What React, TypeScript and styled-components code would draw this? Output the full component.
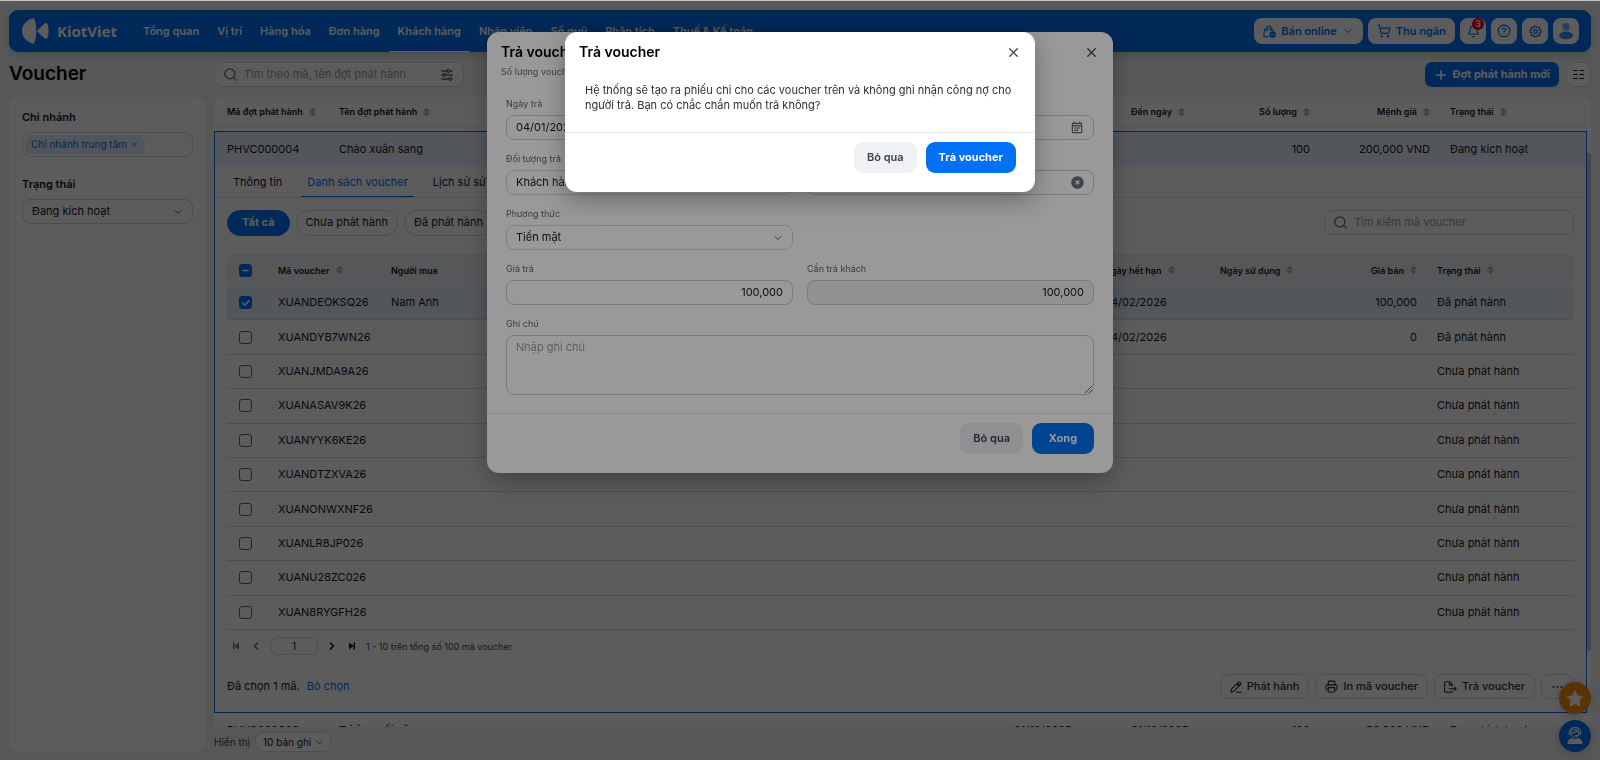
import React from "react";
import styled, { createGlobalStyle, css } from "styled-components";
import { Bell, Check, ChevronDown, ChevronLeft, ChevronRight, CircleHelp, Minus, Plus, Printer, Search, ShoppingCart, X } from "lucide-react";
import { TbAdjustmentsHorizontal, TbSettings } from "react-icons/tb";
import { MdOutlineEventNote } from "react-icons/md";

const blue = "#0070f4";
const line = "#d5d8dd";
const ink = "#15171a";
const muted = "#5d6673";

const GlobalStyle = createGlobalStyle`
  *, *::before, *::after { box-sizing: border-box; }
  body { margin: 0; background: #f1f2f4; }
  body, button, input, select, textarea {
    font-family: Inter, "Liberation Sans", sans-serif;
    font-size: 11px;
    line-height: 15px;
    color: ${ink};
  }
  button { padding: 0; border: 0; background: none; cursor: pointer; }
  h1, h2, p { margin: 0; }
  a { color: inherit; text-decoration: none; }
  svg { flex: none; display: block; }
`;

const Page = styled.div`
  display: flex;
  flex-direction: column;
  height: 100vh;
  min-height: 600px;
  padding: 9px 9px 8px;
  border-top: 1px solid #c1c5c3;
`;

/* Top navigation */
const TopBar = styled.header`
  display: flex;
  align-items: center;
  flex: none;
  height: 42px;
  padding: 0 12px 0 13px;
  border-radius: 9px;
  background: ${blue};
  color: #fff;
  box-shadow: 0 3px 8px rgba(0, 0, 0, 0.16);
`;
const Brand = styled.a`
  display: flex;
  align-items: center;
  gap: 8px;
  width: 112px;
  font: 700 15px/24px "Noto Sans", sans-serif;
`;
const Nav = styled.nav`
  display: flex;
  flex: 1;
  align-self: stretch;
`;
const NavLink = styled.a<{ $active?: boolean }>`
  display: flex;
  align-items: center;
  padding: 0 9px;
  font-weight: 600;
  white-space: nowrap;
  box-shadow: ${(p) => (p.$active ? "inset 0 -1px #fff" : "none")};
`;
const BarActions = styled.div`
  display: flex;
  gap: 5px;
`;
const BarButton = styled.button<{ $square?: boolean }>`
  position: relative;
  display: flex;
  align-items: center;
  justify-content: center;
  gap: 5px;
  height: 26px;
  width: ${(p) => (p.$square ? "26px" : "auto")};
  padding: ${(p) => (p.$square ? "0" : "0 9px")};
  border-radius: 8px;
  background: #fff;
  color: ${blue};
  font-weight: 600;
`;
const Count = styled.span`
  position: absolute;
  top: 0;
  right: 2px;
  width: 12px;
  height: 12px;
  border-radius: 6px;
  background: #f5000c;
  color: #fff;
  font-size: 9px;
  line-height: 12px;
`;

/* Page frame */
const Columns = styled.main`
  display: grid;
  grid-template-columns: 196px minmax(0, 1fr);
  gap: 9px;
  flex: 1;
  min-height: 0;
  padding-top: 10px;
`;
const Column = styled.div`
  display: flex;
  flex-direction: column;
  min-height: 0;
`;
const Title = styled.h1`
  height: 25px;
  margin-bottom: 10px;
  font-size: 19px;
  font-weight: 600;
  line-height: 24px;
  color: #000;
`;
const Sidebar = styled.aside`
  display: flex;
  flex-direction: column;
  gap: 20px;
  flex: 1;
  padding: 13px 12px 13px 13px;
  border-radius: 10px;
  background: #fff;
`;
const Filter = styled.div`
  display: flex;
  flex-direction: column;
  gap: 8px;
`;
const FilterName = styled.label`
  font-weight: 600;
  line-height: 14px;
`;
const boxed = css`
  height: 25px;
  border: 1px solid ${line};
  border-radius: 8px;
  background: #fff;
`;
const TagBox = styled.div`
  ${boxed}
  display: flex;
  align-items: center;
  padding: 0 2px;
`;
const Tag = styled.button`
  display: flex;
  align-items: center;
  gap: 3px;
  height: 19px;
  padding: 0 6px;
  border-radius: 6px;
  background: #e3effe;
  color: ${blue};
  font-size: 10px;
`;

/* Select with its own chevron */
const SelectBox = styled.div<{ $compact?: boolean }>`
  display: grid;
  align-items: center;
  svg {
    grid-area: 1 / 1;
    justify-self: end;
    margin-right: ${(p) => (p.$compact ? "6px" : "9px")};
    pointer-events: none;
    color: ${muted};
  }
`;
const SelectField = styled.select<{ $compact?: boolean }>`
  ${boxed}
  grid-area: 1 / 1;
  width: 100%;
  height: ${(p) => (p.$compact ? "20px" : "25px")};
  padding: ${(p) => (p.$compact ? "0 18px 0 7px" : "0 24px 0 9px")};
  font-size: ${(p) => (p.$compact ? "10px" : "11px")};
  appearance: none;
`;

/* Toolbar */
const Toolbar = styled.div`
  display: flex;
  align-items: center;
  justify-content: space-between;
  flex: none;
  height: 25px;
  margin-bottom: 10px;
`;
const SearchBox = styled.label`
  ${boxed}
  display: flex;
  align-items: center;
  gap: 6px;
  width: 250px;
  padding: 0 8px;
  color: ${muted};
  input {
    flex: 1;
    min-width: 0;
    padding: 0;
    border: 0;
    outline: 0;
    background: none;
  }
  input::placeholder { color: #979da7; }
`;
const Group = styled.div<{ $gap: number }>`
  display: flex;
  align-items: center;
  gap: ${(p) => p.$gap}px;
`;
const NewButton = styled.button`
  display: flex;
  align-items: center;
  gap: 5px;
  height: 25px;
  padding: 0 9px;
  border-radius: 7px;
  background: ${blue};
  color: #fff;
  font-weight: 700;
`;
const OutlineButton = styled.button<{ $square?: boolean }>`
  ${boxed}
  display: flex;
  align-items: center;
  justify-content: center;
  gap: 5px;
  min-width: 25px;
  padding: ${(p) => (p.$square ? "0" : "0 9px")};
  font-weight: 500;
  color: #2a2f36;
`;

/* Voucher batch table */
const Panel = styled.section`
  display: flex;
  flex: 1;
  min-height: 0;
  overflow: hidden;
  border-radius: 8px 8px 0 0;
  background: #fff;
`;
const Track = styled.div`
  width: 4px;
  flex: none;
  padding-top: 56px;
`;
const Thumb = styled.div`
  height: 498px;
  border-radius: 0 2px 2px 0;
  background: #bfc2c7;
`;
const BatchTable = styled.table`
  flex: 1;
  align-self: flex-start;
  width: 100%;
  table-layout: fixed;
  border-spacing: 0;
  text-align: left;
`;
const HeadCell = styled.th<{ $right?: boolean }>`
  padding: 0 0 4px;
  font-size: 9px;
  font-weight: 600;
  white-space: nowrap;
  > div {
    display: flex;
    align-items: center;
    justify-content: ${(p) => (p.$right ? "flex-end" : "flex-start")};
    gap: 6px;
    height: 30px;
    padding: 0 7px 0 13px;
    border-bottom: 1px solid #e8eaed;
  }
`;
const BatchRow = styled.tr<{ $open?: boolean }>`
  td {
    height: ${(p) => (p.$open ? "36px" : "34px")};
    padding: 0 7px 0 13px;
    white-space: nowrap;
  }
  ${(p) =>
    p.$open &&
    css`
      td { background: #e6f1fe; border-top: 1px solid ${blue}; }
      td:first-child { border-left: 1px solid ${blue}; padding-left: 12px; }
      td:last-child { border-right: 1px solid ${blue}; }
    `}
`;
const Num = styled.td`
  text-align: right;
`;
const DetailCell = styled.td`
  padding: 0;
  border: 1px solid ${blue};
  border-top: 0;
`;
const Tabs = styled.div`
  display: flex;
  height: 31px;
  padding-left: 12px;
  border-bottom: 1px solid #e3e5e8;
`;
const Tab = styled.button<{ $active?: boolean }>`
  padding: 0 6px;
  margin-right: 13px;
  color: ${(p) => (p.$active ? blue : ink)};
  box-shadow: ${(p) => (p.$active ? `inset 0 -1px ${blue}` : "none")};
`;
const Detail = styled.div`
  padding: 12px 12px 13px;
`;
const Chip = styled.button<{ $active?: boolean }>`
  height: 26px;
  padding: 0 ${(p) => (p.$active ? "14px" : "9px")};
  border: 1px solid ${(p) => (p.$active ? blue : line)};
  border-radius: 13px;
  background: ${(p) => (p.$active ? blue : "#fff")};
  color: ${(p) => (p.$active ? "#fff" : ink)};
  font-weight: ${(p) => (p.$active ? 700 : 400)};
`;
const CodeTable = styled.table`
  width: 100%;
  height: 376px;
  margin-top: 19px;
  table-layout: fixed;
  border-spacing: 0;
  text-align: left;
  white-space: nowrap;
  th {
    height: 32px;
    padding: 0 7px 0 13px;
    background: #eef1f3;
    font-size: 9px;
    font-weight: 600;
  }
  th:first-child { border-radius: 8px 0 0 8px; }
  th:last-child { border-radius: 0 8px 8px 0; }
  th > div { display: flex; align-items: center; gap: 6px; }
  td {
    padding: 0 7px 0 13px;
    border-bottom: 1px solid #d9dbdf;
  }
  td:first-child, th:first-child { padding: 0 0 0 12px; }
  td:nth-child(6) { text-align: right; }
  th:nth-child(6) > div { justify-content: flex-end; }
`;
const CodeRow = styled.tr<{ $picked?: boolean }>`
  background: ${(p) => (p.$picked ? "#e6f1fe" : "#fff")};
`;
const TickBox = styled.label`
  display: grid;
  width: 13px;
  height: 13px;
  input {
    grid-area: 1 / 1;
    width: 13px;
    height: 13px;
    margin: 0;
    border: 1px solid #5a6370;
    border-radius: 3px;
    appearance: none;
  }
  input:checked, input[data-mixed="true"] { background: ${blue}; border-color: ${blue}; }
  svg { grid-area: 1 / 1; place-self: center; color: #fff; pointer-events: none; }
`;
const Pager = styled.div`
  display: flex;
  align-items: center;
  gap: 8px;
  height: 32px;
  padding-left: 3px;
  font-size: 9px;
  color: #3d434b;
`;
const PageInput = styled.input`
  ${boxed}
  width: 48px;
  height: 18px;
  padding: 0;
  font-size: 10px;
  text-align: center;
`;
const PagerButton = styled.button<{ $off?: boolean }>`
  display: grid;
  place-items: center;
  width: 12px;
  color: ${(p) => (p.$off ? "#6b717b" : "#111")};
`;
const Actions = styled.div`
  display: flex;
  align-items: center;
  justify-content: space-between;
  margin-top: 12px;
`;
const TextLink = styled.a`
  color: ${blue};
`;
const Footer = styled.div`
  display: flex;
  align-items: center;
  gap: 5px;
  flex: none;
  height: 25px;
  padding-top: 5px;
  font-size: 10px;
  color: #3d434b;
`;

const Floating = styled.div`
  position: fixed;
  right: 9px;
  bottom: 8px;
  display: flex;
  flex-direction: column;
  gap: 6px;
`;
const Round = styled.button<{ $color: string }>`
  display: grid;
  place-items: center;
  width: 32px;
  height: 32px;
  border-radius: 16px;
  background: ${(p) => p.$color};
  color: #fff;
  box-shadow: 0 2px 8px rgba(0, 0, 0, 0.2);
`;

/* Dialogs */
const Shade = styled.div`
  position: fixed;
  inset: 1px 0 0;
  display: flex;
  justify-content: center;
  align-items: flex-start;
  padding-top: 31px;
  background: rgba(0, 0, 0, 0.4);
`;
const Dialog = styled.section<{ $wide?: boolean }>`
  width: ${(p) => (p.$wide ? "626px" : "470px")};
  border-radius: 12px;
  background: #fff;
  box-shadow: 0 8px 24px rgba(0, 0, 0, 0.3);
`;
const DialogHead = styled.div`
  display: flex;
  align-items: center;
  justify-content: space-between;
  height: 40px;
  padding: 0 14px;
  h2 {
    font-size: 14px;
    font-weight: 600;
    line-height: 20px;
    color: #000;
  }
  button { color: #3a4250; }
`;
const DialogNote = styled.p`
  height: 24px;
  padding: 0 14px;
  margin-top: -8px;
  font-size: 9px;
  color: ${muted};
`;
const Message = styled.p`
  padding: 11px 14px 19px 20px;
  color: #2b3038;
`;
const Form = styled.form`
  display: grid;
  grid-template-columns: 1fr 1fr;
  gap: 11px 14px;
  padding: 8px 19px 18px;
`;
const Field = styled.div<{ $full?: boolean }>`
  display: flex;
  flex-direction: column;
  gap: 4px;
  grid-column: ${(p) => (p.$full ? "1 / -1" : "auto")};
`;
const FieldName = styled.label`
  height: 15px;
  font-size: 9px;
  line-height: 15px;
  color: ${muted};
`;
const InputBox = styled.div<{ $locked?: boolean }>`
  ${boxed}
  display: flex;
  align-items: center;
  padding: 0 9px;
  border-color: #c8ccd2;
  background: ${(p) => (p.$locked ? "#f0f2f5" : "#fff")};
  color: ${muted};
  input {
    flex: 1;
    min-width: 0;
    padding: 0;
    border: 0;
    outline: 0;
    background: none;
  }
`;
const AmountInput = styled.input`
  text-align: right;
`;
const NoteArea = styled.textarea`
  ${boxed}
  width: 100%;
  height: 60px;
  padding: 4px 9px;
  border-color: #c8ccd2;
  resize: vertical;
  &::placeholder { color: #979da7; }
`;
const DialogFoot = styled.div`
  display: flex;
  justify-content: flex-end;
  gap: 9px;
  padding: 9px 19px 19px;
  border-top: 1px solid #e1e3e6;
`;
const DialogButton = styled.button<{ $primary?: boolean }>`
  height: 31px;
  min-width: 62px;
  padding: 0 13px;
  border-radius: 9px;
  background: ${(p) => (p.$primary ? blue : "#f0f1f3")};
  color: ${(p) => (p.$primary ? "#fff" : "#3a4250")};
  font-weight: ${(p) => (p.$primary ? 700 : 600)};
`;

const Logo = () => (
  <svg width="27" height="26" viewBox="0 0 27 26" fill="#fff">
    <path d="M11 0.3C4.6 2 0 7 0 13s4.6 11 11 12.7c1.6 0 3.3-5.400 3.300-12.700S12.600.3 11 .3Z" />
    <path d="M15.500 12.200 22.600 5.400c1.200-.9 2.700-.1 3.100 1.300 1.200 4.100 1.200 8.500 0 12.600-.4 1.400-1.900 2.200-3.100 1.300l-7.100-6.800c-.5-.5-.5-1.100 0-1.600Z" />
  </svg>
);

const BagIcon = () => (
  <svg width="13" height="13" viewBox="0 0 13 13" fill="none" stroke="currentColor" strokeWidth="1.100" strokeLinecap="round">
    <path d="M5.500 11.800H2.200c-.9 0-1.500-.7-1.400-1.500L1.500 5c.1-.6.6-1 1.200-1h6.200c.6 0 1.100.4 1.200 1l.1.700M3.700 5.800V3.200a2.200 2.200 0 0 1 4.400 0V5.800" />
    <circle cx="9.600" cy="9.600" r="2.700" fill="currentColor" />
    <path d="M7.800 9.600h3.600" stroke="#fff" strokeWidth=".7" />
  </svg>
);

const UserIcon = () => (
  <svg width="16" height="17" viewBox="0 0 16 17">
    <circle cx="8" cy="3.800" r="3.700" fill="#6fb0fb" />
    <ellipse cx="8" cy="12.400" rx="7" ry="3.900" fill="#3c8ff7" />
  </svg>
);

const GridIcon = () => (
  <svg width="13" height="11" viewBox="0 0 13 11" stroke="#15171a" strokeWidth="1.200">
    <path d="M1 1.500h4.500M7.500 1.500H12M1 5.500h4.500M7.500 5.500H12M1 9.500h4.500M7.500 9.500H12" />
  </svg>
);

const Sort = () => (
  <svg width="7" height="10" viewBox="0 0 8 10" fill="#a9adb4">
    <path d="M4 0 8 4.400H0zM4 10 0 5.600h8z" />
  </svg>
);

const PenIcon = () => (
  <svg width="12" height="12" viewBox="0 0 12 12" fill="none" stroke="currentColor" strokeWidth="1.100" strokeLinejoin="round">
    <path d="M.8 11.200 1.500 8.200 8.300 1.300c.5-.5 1.200-.5 1.700 0l.5.500c.5.500.5 1.200 0 1.700L3.700 10.400Z" />
    <path d="m7 2.500 2.300 2.300" strokeWidth="2" />
    <path d="M6 11.300h5.600" />
  </svg>
);

const ReturnIcon = () => (
  <svg width="13" height="12" viewBox="0 0 13 12" fill="none" stroke="currentColor" strokeWidth="1.100" strokeLinejoin="round">
    <path d="M8.400 10v.3c0 .6-.4 1-1 1H1.600c-.6 0-1-.4-1-1V1.700c0-.6.4-1 1-1h3.900l2.900 2.900v2M5.300.9v3h3" />
    <path d="M4.800 7.800h7.400M10.300 5.900l1.900 1.900-1.900 1.900" />
  </svg>
);

const EdgeIcon = ({ flip }: { flip?: boolean }) => (
  <svg width="8" height="8" viewBox="0 0 8 8" fill="currentColor">
    {flip ? <path d="M5.500.5H7v7H5.500zM1 .5v7L5.500 4z" /> : <path d="M1 .5h1.500v7H1zM7 .5v7L2.500 4z" />}
  </svg>
);

const ClearIcon = () => (
  <svg width="13" height="13" viewBox="0 0 13 13">
    <circle cx="6.500" cy="6.500" r="6.300" fill="#68717f" />
    <path d="m4.800 4.800 3.400 3.400m0-3.400L4.800 8.200" stroke="#fff" strokeWidth="1.300" />
  </svg>
);

const StarIcon = () => (
  <svg width="18" height="17" viewBox="0 0 18 17" fill="#fff" stroke="#fff" strokeLinejoin="round">
    <path d="m9 1 2.400 4.900 5.300.8-3.800 3.800.9 5.400L9 13.400l-4.800 2.500.9-5.400L1.300 6.700l5.300-.8Z" />
  </svg>
);

const SupportIcon = () => (
  <svg width="16" height="18" viewBox="0 0 16 18" fill="none" stroke="#fff" strokeWidth="1.100">
    <circle cx="8" cy="6.300" r="4" />
    <path d="M2.300 8V6a5.700 5.700 0 0 1 11.400 0v2M4.300 6c2.600 0 4.300-.8 5-2.300.5 1.300 1.200 2 2.400 2.300M8 8.500h3" />
    <path d="M1 16.500c0-2.500 1.700-4.300 4-4.700 1.800 1 4.200 1 6 0 2.300.4 4 2.200 4 4.700Z" fill="#fff" />
  </svg>
);

const menu = ["Tổng quan", "Vị trí", "Hàng hóa", "Đơn hàng", "Khách hàng", "Nhân viên", "Sổ quỹ", "Phân tích", "Thuế & Kế toán"];

type Code = { code: string; buyer?: string; expires?: string; price?: string; issued?: boolean; picked?: boolean };
const codes: Code[] = [
  { code: "XUANDEOKSQ26", buyer: "Nam Anh", expires: "04/02/2026", price: "100,000", issued: true, picked: true },
  { code: "XUANDYB7WN26", expires: "04/02/2026", price: "0", issued: true },
  { code: "XUANJMDA9A26" },
  { code: "XUANASAV9K26" },
  { code: "XUANYYK6KE26" },
  { code: "XUANDTZXVA26" },
  { code: "XUANONWXNF26" },
  { code: "XUANLR8JP026" },
  { code: "XUANU28ZC026" },
  { code: "XUAN8RYGFH26" },
];

const BatchHead = ({ label, right }: { label: string; right?: boolean }) => (
  <HeadCell $right={right}>
    <div>{label}<Sort /></div>
  </HeadCell>
);

const Tick = ({ label, checked, mixed }: { label: string; checked?: boolean; mixed?: boolean }) => (
  <TickBox>
    <input type="checkbox" aria-label={label} defaultChecked={checked} data-mixed={mixed} />
    {checked && <Check size={10} strokeWidth={4} />}
    {mixed && <Minus size={9} strokeWidth={4} />}
  </TickBox>
);

const VoucherCodes = () => (
  <Detail>
    <Toolbar>
      <Group $gap={6}>
        <Chip $active>Tất cả</Chip>
        <Chip>Chưa phát hành</Chip>
        <Chip>Đã phát hành</Chip>
      </Group>
      <SearchBox>
        <Search size={15} />
        <input aria-label="Tìm kiếm mã voucher" placeholder="Tìm kiếm mã voucher" />
      </SearchBox>
    </Toolbar>
    <CodeTable>
      <colgroup>
        <col width="38" /><col width="113" /><col /><col width="116" /><col width="117" /><col width="100" /><col width="150" />
      </colgroup>
      <thead>
        <tr>
          <th><Tick label="Chọn tất cả" mixed /></th>
          <th><div>Mã voucher<Sort /></div></th>
          <th>Người mua</th>
          <th><div>Ngày hết hạn<Sort /></div></th>
          <th><div>Ngày sử dụng<Sort /></div></th>
          <th><div>Giá bán<Sort /></div></th>
          <th><div>Trạng thái<Sort /></div></th>
        </tr>
      </thead>
      <tbody>
        {codes.map((c) => (
          <CodeRow key={c.code} $picked={c.picked}>
            <td><Tick label={c.code} checked={c.picked} /></td>
            <td>{c.code}</td>
            <td>{c.buyer}</td>
            <td>{c.expires}</td>
            <td />
            <td>{c.price}</td>
            <td>{c.issued ? "Đã phát hành" : "Chưa phát hành"}</td>
          </CodeRow>
        ))}
      </tbody>
    </CodeTable>
    <Pager>
      <PagerButton $off aria-label="Trang đầu"><EdgeIcon /></PagerButton>
      <PagerButton $off aria-label="Trang trước"><ChevronLeft size={12} strokeWidth={3} /></PagerButton>
      <PageInput aria-label="Trang" defaultValue="1" />
      <PagerButton aria-label="Trang sau"><ChevronRight size={12} strokeWidth={3} /></PagerButton>
      <PagerButton aria-label="Trang cuối"><EdgeIcon flip /></PagerButton>
      <span>1 - 10 trên tổng số 100 mã voucher</span>
    </Pager>
    <Actions>
      <Group $gap={7}>
        <span>Đã chọn 1 mã.</span>
        <TextLink href="#">Bỏ chọn</TextLink>
      </Group>
      <Group $gap={6}>
        <OutlineButton><PenIcon />Phát hành</OutlineButton>
        <OutlineButton><Printer size={13} />In mã voucher</OutlineButton>
        <OutlineButton><ReturnIcon />Trả voucher</OutlineButton>
        <OutlineButton aria-label="Thêm">
          <svg width="13" height="4" viewBox="0 0 13 4" fill="currentColor">
            <circle cx="2.500" cy="2" r="1" /><circle cx="6.500" cy="2" r="1" /><circle cx="10.500" cy="2" r="1" />
          </svg>
        </OutlineButton>
      </Group>
    </Actions>
  </Detail>
);

const Batches = () => (
  <Panel>
    <BatchTable>
      <colgroup>
        <col width="112" /><col /><col width="117" /><col width="117" /><col width="82" /><col width="120" /><col width="150" />
      </colgroup>
      <thead>
        <tr>
          <BatchHead label="Mã đợt phát hành" />
          <BatchHead label="Tên đợt phát hành" />
          <BatchHead label="Từ ngày" />
          <BatchHead label="Đến ngày" />
          <BatchHead label="Số lượng" right />
          <BatchHead label="Mệnh giá" right />
          <BatchHead label="Trạng thái" />
        </tr>
      </thead>
      <tbody>
        <BatchRow $open>
          <td>PHVC000004</td>
          <td>Chào xuân sang</td>
          <td />
          <td />
          <Num>100</Num>
          <Num>200,000 VND</Num>
          <td>Đang kích hoạt</td>
        </BatchRow>
        <tr>
          <DetailCell colSpan={7}>
            <Tabs>
              <Tab>Thông tin</Tab>
              <Tab $active>Danh sách voucher</Tab>
              <Tab>Lịch sử sử dụng</Tab>
            </Tabs>
            <VoucherCodes />
          </DetailCell>
        </tr>
        <BatchRow>
          <td>PHVC000003</td>
          <td>Tri ân cuối năm</td>
          <td>01/10/2025</td>
          <td>31/12/2025</td>
          <Num>100</Num>
          <Num>50,000 VND</Num>
          <td>Đang kích hoạt</td>
        </BatchRow>
      </tbody>
    </BatchTable>
    <Track><Thumb /></Track>
  </Panel>
);

const ReturnDialog = () => (
  <Shade>
    <Dialog $wide role="dialog" aria-label="Trả voucher">
      <DialogHead>
        <h2>Trả voucher</h2>
        <button aria-label="Đóng"><X size={15} strokeWidth={2} /></button>
      </DialogHead>
      <DialogNote>Số lượng voucher: 1</DialogNote>
      <Form>
        <Field $full>
          <FieldName htmlFor="date">Ngày trả</FieldName>
          <InputBox><input id="date" defaultValue="04/01/2026" /><MdOutlineEventNote size={14} /></InputBox>
        </Field>
        <Field>
          <FieldName htmlFor="target">Đối tượng trả</FieldName>
          <SelectBox>
            <SelectField id="target"><option>Khách hàng</option></SelectField>
            <ChevronDown size={12} />
          </SelectBox>
        </Field>
        <Field>
          <FieldName htmlFor="customer">Người trả</FieldName>
          <InputBox><input id="customer" defaultValue="Nam Anh" /><ClearIcon /></InputBox>
        </Field>
        <Field>
          <FieldName htmlFor="method">Phương thức</FieldName>
          <SelectBox>
            <SelectField id="method"><option>Tiền mặt</option></SelectField>
            <ChevronDown size={12} />
          </SelectBox>
        </Field>
        <span />
        <Field>
          <FieldName htmlFor="value">Giá trả</FieldName>
          <InputBox><AmountInput id="value" defaultValue="100,000" /></InputBox>
        </Field>
        <Field>
          <FieldName htmlFor="due">Cần trả khách</FieldName>
          <InputBox $locked><AmountInput id="due" defaultValue="100,000" readOnly /></InputBox>
        </Field>
        <Field $full>
          <FieldName htmlFor="note">Ghi chú</FieldName>
          <NoteArea id="note" placeholder="Nhập ghi chú" />
        </Field>
      </Form>
      <DialogFoot>
        <DialogButton>Bỏ qua</DialogButton>
        <DialogButton $primary>Xong</DialogButton>
      </DialogFoot>
    </Dialog>
  </Shade>
);

const ConfirmDialog = () => (
  <Shade>
    <Dialog role="alertdialog" aria-label="Trả voucher">
      <DialogHead>
        <h2>Trả voucher</h2>
        <button aria-label="Đóng"><X size={15} strokeWidth={2} /></button>
      </DialogHead>
      <Message>
        Hệ thống sẽ tạo ra phiếu chi cho các voucher trên và không ghi nhận công nợ cho người trả. Bạn có chắc chắn muốn trả không?
      </Message>
      <DialogFoot>
        <DialogButton>Bỏ qua</DialogButton>
        <DialogButton $primary>Trả voucher</DialogButton>
      </DialogFoot>
    </Dialog>
  </Shade>
);

export default function App() {
  return (
    <>
      <GlobalStyle />
      <Page>
        <TopBar>
          <Brand href="#"><Logo />KiotViet</Brand>
          <Nav>
            {menu.map((m) => (
              <NavLink key={m} href="#" $active={m === "Khách hàng"}>{m}</NavLink>
            ))}
          </Nav>
          <BarActions>
            <BarButton><BagIcon />Bán online<ChevronDown size={12} /></BarButton>
            <BarButton><ShoppingCart size={14} />Thu ngân</BarButton>
            <BarButton $square aria-label="Thông báo"><Bell size={13} /><Count>3</Count></BarButton>
            <BarButton $square aria-label="Trợ giúp"><CircleHelp size={14} /></BarButton>
            <BarButton $square aria-label="Thiết lập"><TbSettings size={15} /></BarButton>
            <BarButton $square aria-label="Tài khoản"><UserIcon /></BarButton>
          </BarActions>
        </TopBar>
        <Columns>
          <Column>
            <Title>Voucher</Title>
            <Sidebar>
              <Filter>
                <FilterName as="span">Chi nhánh</FilterName>
                <TagBox><Tag>Chi nhánh trung tâm<X size={9} /></Tag></TagBox>
              </Filter>
              <Filter>
                <FilterName htmlFor="status">Trạng thái</FilterName>
                <SelectBox>
                  <SelectField id="status"><option>Đang kích hoạt</option></SelectField>
                  <ChevronDown size={12} />
                </SelectBox>
              </Filter>
            </Sidebar>
          </Column>
          <Column>
            <Toolbar>
              <SearchBox>
                <Search size={15} />
                <input aria-label="Tìm theo mã, tên đợt phát hành" placeholder="Tìm theo mã, tên đợt phát hành" />
                <TbAdjustmentsHorizontal size={16} />
              </SearchBox>
              <Group $gap={7}>
                <NewButton><Plus size={14} strokeWidth={3} />Đợt phát hành mới</NewButton>
                <OutlineButton $square aria-label="Chọn cột"><GridIcon /></OutlineButton>
              </Group>
            </Toolbar>
            <Batches />
            <Footer>
              <label htmlFor="size">Hiển thị</label>
              <SelectBox $compact>
                <SelectField $compact id="size"><option>10 bản ghi</option></SelectField>
                <ChevronDown size={11} />
              </SelectBox>
            </Footer>
          </Column>
        </Columns>
        <Floating>
          <Round $color="#fa8c0f" aria-label="Đánh giá"><StarIcon /></Round>
          <Round $color={blue} aria-label="Hỗ trợ"><SupportIcon /></Round>
        </Floating>
      </Page>
      <ReturnDialog />
      <ConfirmDialog />
    </>
  );
}
